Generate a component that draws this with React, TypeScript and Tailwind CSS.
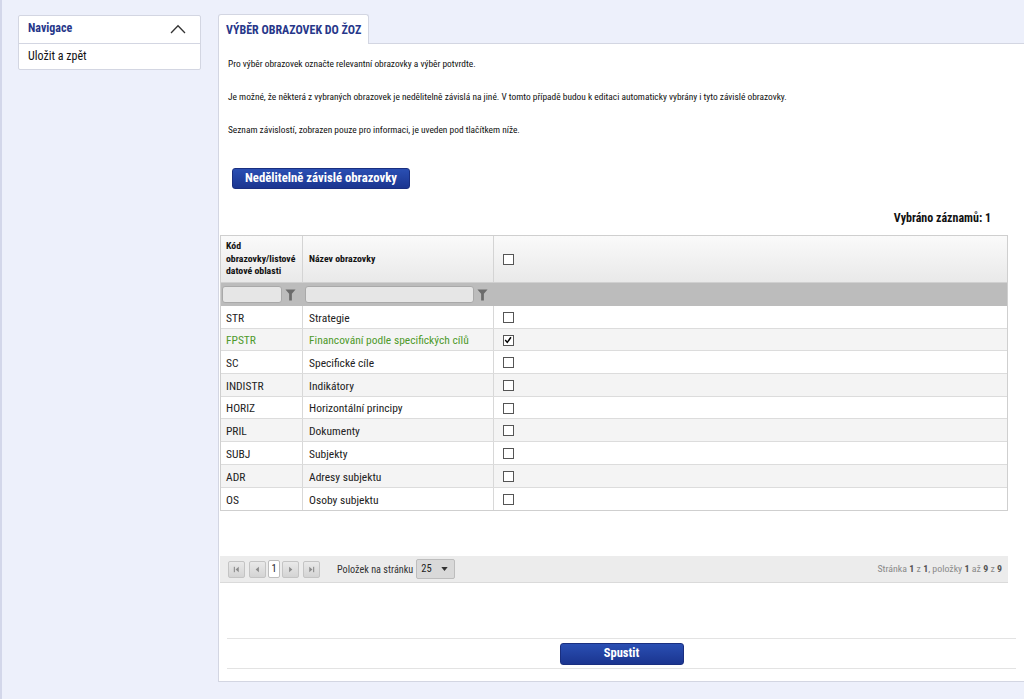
import React from "react";

const rows = [
  { code: "STR", name: "Strategie", checked: false },
  { code: "FPSTR", name: "Financování podle specifických cílů", checked: true },
  { code: "SC", name: "Specifické cíle", checked: false },
  { code: "INDISTR", name: "Indikátory", checked: false },
  { code: "HORIZ", name: "Horizontální principy", checked: false },
  { code: "PRIL", name: "Dokumenty", checked: false },
  { code: "SUBJ", name: "Subjekty", checked: false },
  { code: "ADR", name: "Adresy subjektu", checked: false },
  { code: "OS", name: "Osoby subjektu", checked: false },
];

function Box({ checked }: { checked?: boolean }) {
  return (
    <span className="relative inline-block w-[11px] h-[11px] border border-[#555] bg-white">
      {checked && (
        <svg viewBox="0 0 11 11" className="absolute left-0 top-0 w-[9px] h-[9px]">
          <path d="M1.5 5 L4 7.8 L8.5 1.5" fill="none" stroke="#000" strokeWidth="1.8" />
        </svg>
      )}
    </span>
  );
}

function Funnel() {
  return (
    <svg viewBox="0 0 12 13" className="w-[11px] h-[12px]">
      <path d="M0.5 0.5 H11.5 L7.5 5 V12.5 H4.5 V5 Z" fill="#6b6b6b" />
    </svg>
  );
}

function PagerBtn({ kind }: { kind: "first" | "prev" | "next" | "last" }) {
  return (
    <span className="flex items-center justify-center w-[17px] h-[17px] border border-[#c4c4c4] rounded-[2px] bg-gradient-to-b from-[#e9e9e9] to-[#d4d4d4]">
      <svg viewBox="0 0 10 10" className="w-[9px] h-[9px]">
        {kind === "first" && (
          <>
            <rect x="2" y="2" width="1.2" height="6" fill="#8a8a8a" />
            <path d="M7.5 2 L4 5 L7.5 8 Z" fill="#8a8a8a" />
          </>
        )}
        {kind === "prev" && <path d="M6.5 2 L3 5 L6.5 8 Z" fill="#8a8a8a" />}
        {kind === "next" && <path d="M3.5 2 L7 5 L3.5 8 Z" fill="#8a8a8a" />}
        {kind === "last" && (
          <>
            <path d="M2.5 2 L6 5 L2.5 8 Z" fill="#8a8a8a" />
            <rect x="6.8" y="2" width="1.2" height="6" fill="#8a8a8a" />
          </>
        )}
      </svg>
    </span>
  );
}

export default function App() {
  return (
    <div className="w-[1024px] h-[699px] overflow-hidden bg-[#edf0fb] border-l-2 border-[#d3d7ea] flex font-['Roboto',sans-serif] font-stretch-condensed text-[#222]">
      {/* Left navigation */}
      <div className="ml-[16px] mt-[15px] w-[183px] shrink-0">
        <div className="bg-white border border-[#d3d6e2] rounded-[2px]">
          <div className="h-[28px] flex items-center justify-between pl-[9px] pr-[14px] pb-[3px] border-b border-[#d3d6e2]">
            <span className="text-[12px] font-bold text-[#27378a]">Navigace</span>
            <svg viewBox="0 0 16 10" className="w-[16px] h-[10px] mt-[2px]">
              <path d="M1 9 L8 1.8 L15 9" fill="none" stroke="#333" strokeWidth="1.3" />
            </svg>
          </div>
          <div className="h-[25px] flex items-center pl-[9px] pb-[1px] text-[12px] text-[#111]">Uložit a zpět</div>
        </div>
      </div>

      {/* Main */}
      <div className="ml-[17px] mt-[14px] w-[810px] shrink-0 flex flex-col">
        <div className="flex">
          <div className="relative z-10 -mb-px h-[30px] flex items-center px-[7px] bg-white border border-b-0 border-[#d3d6e2] rounded-t-[3px]">
            <span className="text-[12px] font-bold text-[#27378a]">VÝBĚR OBRAZOVEK DO ŽOZ</span>
          </div>
        </div>
        <div className="h-[639px] bg-white border border-[#d3d6e2] flex flex-col">
          <div className="pl-[9px] pt-[14px] text-[9.4px] leading-[12px] text-[#111] flex flex-col gap-[21px]">
            <p>Pro výběr obrazovek označte relevantní obrazovky a výběr potvrdte.</p>
            <p>Je možné, že některá z vybraných obrazovek je nedělitelně závislá na jiné. V tomto případě budou k editaci automaticky vybrány i tyto závislé obrazovky.</p>
            <p>Seznam závislostí, zobrazen pouze pro informaci, je uveden pod tlačítkem níže.</p>
          </div>
          <div className="pl-[13px] mt-[29px]">
            <button className="h-[21px] px-[12px] rounded-[3px] border border-[#1a2f80] bg-gradient-to-b from-[#2a4fb3] to-[#1b3590] text-white text-[12.75px] font-bold leading-none">
              Nedělitelně závislé obrazovky
            </button>
          </div>
          <div className="mt-[22px] pr-[36px] text-right text-[12px] font-bold text-[#111] leading-[14px]">Vybráno záznamů: 1</div>

          <div className="pl-[1px] mt-[10px]">
            <div className="w-[788px] border border-[#cfcfcf]">
              {/* header */}
              <div className="flex h-[47px] bg-gradient-to-b from-[#fafafa] to-[#e9e9e9] border-b border-[#d0d0d0] text-[9.8px] font-bold leading-[12.5px] text-[#111]">
                <div className="w-[82px] shrink-0 border-r border-[#d4d4d4] pl-[5px] flex items-center">
                  <div>Kód<br />obrazovky/listové<br />datové oblasti</div>
                </div>
                <div className="w-[191px] shrink-0 border-r border-[#d4d4d4] pl-[6px] flex items-center">Název obrazovky</div>
                <div className="flex-1 pl-[9px] flex items-center"><Box /></div>
              </div>
              {/* filter */}
              <div className="flex h-[23px] bg-[#bcbcbc] items-center">
                <div className="w-[82px] shrink-0 flex items-center pl-[1px] gap-[3px]">
                  <span className="w-[60px] h-[17px] rounded-[3px] border border-[#a9a9a9] bg-[#e6e6e6]" />
                  <Funnel />
                </div>
                <div className="w-[191px] shrink-0 flex items-center pl-[2px] gap-[3px]">
                  <span className="w-[169px] h-[17px] rounded-[3px] border border-[#a9a9a9] bg-[#e6e6e6]" />
                  <Funnel />
                </div>
                <div className="flex-1" />
              </div>
              {/* rows */}
              {rows.map((r, i) => (
                <div
                  key={r.code}
                  className={`flex h-[22.7px] text-[11.5px] ${i % 2 === 1 ? "bg-[#f4f4f4]" : "bg-white"} ${i < rows.length - 1 ? "border-b border-[#dcdcdc]" : ""} ${r.checked ? "text-[#4e9a2b]" : "text-[#222]"}`}
                >
                  <div className="w-[82px] shrink-0 border-r border-[#d8d8d8] pl-[5px] pt-[3px] flex items-center">{r.code}</div>
                  <div className="w-[191px] shrink-0 border-r border-[#d8d8d8] pl-[6px] pt-[3px] flex items-center">{r.name}</div>
                  <div className="flex-1 pl-[9px] pt-[1px] flex items-center"><Box checked={r.checked} /></div>
                </div>
              ))}
            </div>

            {/* pager */}
            <div className="mt-[45px] w-[788px] h-[27px] bg-[#ececec] border-b border-[#dadada] flex items-center pl-[8px] pr-[6px]">
              <PagerBtn kind="first" />
              <span className="w-[4px]" />
              <PagerBtn kind="prev" />
              <span className="ml-[2px] w-[12px] h-[18px] bg-white border border-[#bdbdbd] rounded-[2px] text-[10.5px] flex items-center justify-center text-[#222]">1</span>
              <span className="w-[2px]" />
              <PagerBtn kind="next" />
              <span className="w-[4px]" />
              <PagerBtn kind="last" />
              <span className="ml-[17px] text-[10.2px] text-[#333]">Položek na stránku</span>
              <span className="ml-[3px] w-[39px] h-[20px] rounded-[2px] border border-[#bdbdbd] bg-[#d9d9d9] flex items-center justify-between pl-[4px] pr-[6px] text-[10.5px] text-[#222]">
                25
                <svg viewBox="0 0 8 5" className="w-[7px] h-[4px]"><path d="M0 0 H8 L4 5 Z" fill="#333" /></svg>
              </span>
              <span className="ml-auto text-[9.9px] text-[#8a8a8a]">
                Stránka <b className="text-[#555]">1</b> z <b className="text-[#555]">1</b>, položky <b className="text-[#555]">1</b> až <b className="text-[#555]">9</b> z <b className="text-[#555]">9</b>
              </span>
            </div>
          </div>

          {/* footer */}
          <div className="mt-[55px] ml-[8px] w-[789px] border-t border-b border-[#e3e3e3] h-[31px] flex items-center justify-center">
            <button className="h-[22px] w-[124px] rounded-[3px] border border-[#1a2f80] bg-gradient-to-b from-[#2a4fb3] to-[#1b3590] text-white text-[12.5px] font-bold leading-none">
              Spustit
            </button>
          </div>
        </div>
      </div>
    </div>
  );
}
